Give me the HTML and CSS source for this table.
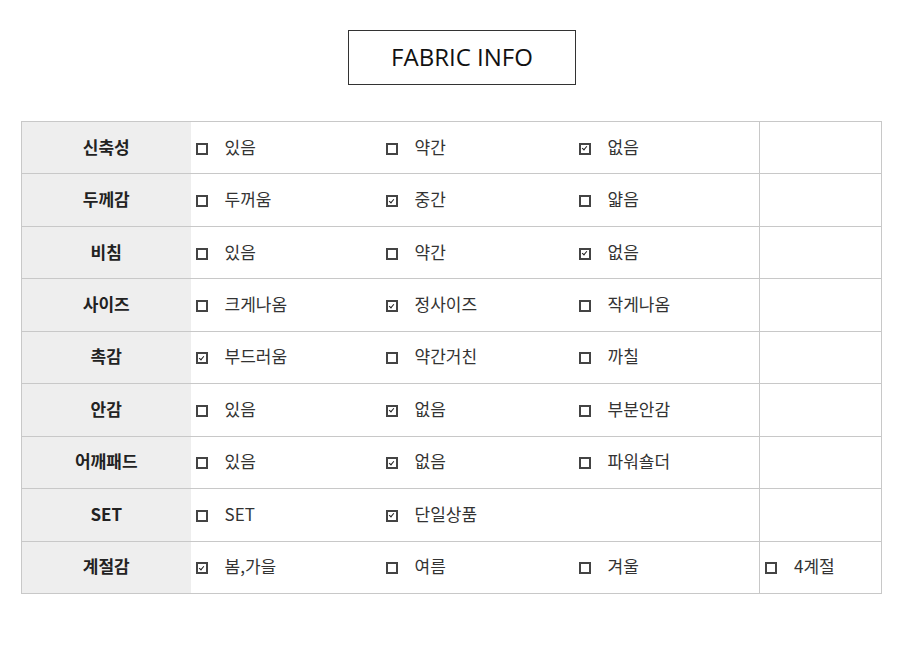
FILE: index.html
```html
<!DOCTYPE html>
<html lang="ko">
<head>
<meta charset="utf-8">
<title>Fabric Info</title>
<link rel="stylesheet" href="styles.css">
</head>
<body>
<div class="page">
  <div class="title-wrap"><h1 class="title">FABRIC INFO</h1></div>
  <table class="info">
    <colgroup>
      <col class="c-label"><col class="c-1"><col class="c-2"><col class="c-3"><col class="c-4">
    </colgroup>
    <tbody>
      <tr><th>신축성</th><td><span class="cb"></span>있음</td><td><span class="cb"></span>약간</td><td><span class="cb on"></span>없음</td><td class="last"></td></tr>
      <tr><th>두께감</th><td><span class="cb"></span>두꺼움</td><td><span class="cb on"></span>중간</td><td><span class="cb"></span>얇음</td><td class="last"></td></tr>
      <tr><th>비침</th><td><span class="cb"></span>있음</td><td><span class="cb"></span>약간</td><td><span class="cb on"></span>없음</td><td class="last"></td></tr>
      <tr><th>사이즈</th><td><span class="cb"></span>크게나옴</td><td><span class="cb on"></span>정사이즈</td><td><span class="cb"></span>작게나옴</td><td class="last"></td></tr>
      <tr><th>촉감</th><td><span class="cb on"></span>부드러움</td><td><span class="cb"></span>약간거친</td><td><span class="cb"></span>까칠</td><td class="last"></td></tr>
      <tr><th>안감</th><td><span class="cb"></span>있음</td><td><span class="cb on"></span>없음</td><td><span class="cb"></span>부분안감</td><td class="last"></td></tr>
      <tr><th>어깨패드</th><td><span class="cb"></span>있음</td><td><span class="cb on"></span>없음</td><td><span class="cb"></span>파워숄더</td><td class="last"></td></tr>
      <tr><th>SET</th><td><span class="cb"></span>SET</td><td><span class="cb on"></span>단일상품</td><td></td><td class="last"></td></tr>
      <tr><th>계절감</th><td><span class="cb on"></span>봄,가을</td><td><span class="cb"></span>여름</td><td><span class="cb"></span>겨울</td><td class="last"><span class="cb"></span>4계절</td></tr>
    </tbody>
  </table>
</div>
</body>
</html>
```

FILE: styles.css
```css
html, body {
  margin: 0;
  padding: 0;
  background: #ffffff;
}
body {
  font-family: "Open Sans", "Noto Sans CJK KR", sans-serif;
  color: #333333;
}
.page {
  padding: 30px 0 0 21px;
}
.title-wrap {
  display: flex;
  padding-left: 327px;
}
.title {
  margin: 0;
  box-sizing: border-box;
  width: 228px;
  height: 55px;
  padding-bottom: 3px;
  border: 1px solid #333333;
  display: flex;
  align-items: center;
  justify-content: center;
  font-size: 24px;
  font-weight: 400;
  color: #111111;
}
.info {
  margin-top: 36px;
  border-collapse: collapse;
  table-layout: fixed;
  width: 860px;
  border: 1px solid #c8c8c8;
}
.c-label { width: 169px; }
.c-1 { width: 190px; }
.c-2 { width: 193px; }
.c-3 { width: 186px; }
.c-4 { width: 122px; }
.info tr {
  height: 52.44px;
  border-bottom: 1px solid #c8c8c8;
}
.info th {
  background: #eeeeee;
  font-family: "Noto Sans CJK KR", "Open Sans", sans-serif;
  font-weight: 700;
  font-size: 17px;
  color: #222222;
  text-align: center;
  padding: 0 0 3px 0;
}
.info td {
  font-family: "Noto Sans CJK KR", "Open Sans", sans-serif;
  font-size: 17px;
  color: #333333;
  padding: 0 0 3px 5px;
  vertical-align: middle;
  white-space: nowrap;
}
.info td.last {
  border-left: 1px solid #c8c8c8;
}
.cb {
  display: inline-block;
  box-sizing: border-box;
  width: 12px;
  height: 12px;
  border: 2px solid #444444;
  margin-right: 17px;
  vertical-align: -1px;
  position: relative;
}
.cb.on::after {
  content: "";
  position: absolute;
  left: 2.5px;
  top: 0.5px;
  width: 2px;
  height: 4px;
  border-right: 1.5px solid #222222;
  border-bottom: 1.5px solid #222222;
  transform: rotate(40deg);
}
```
